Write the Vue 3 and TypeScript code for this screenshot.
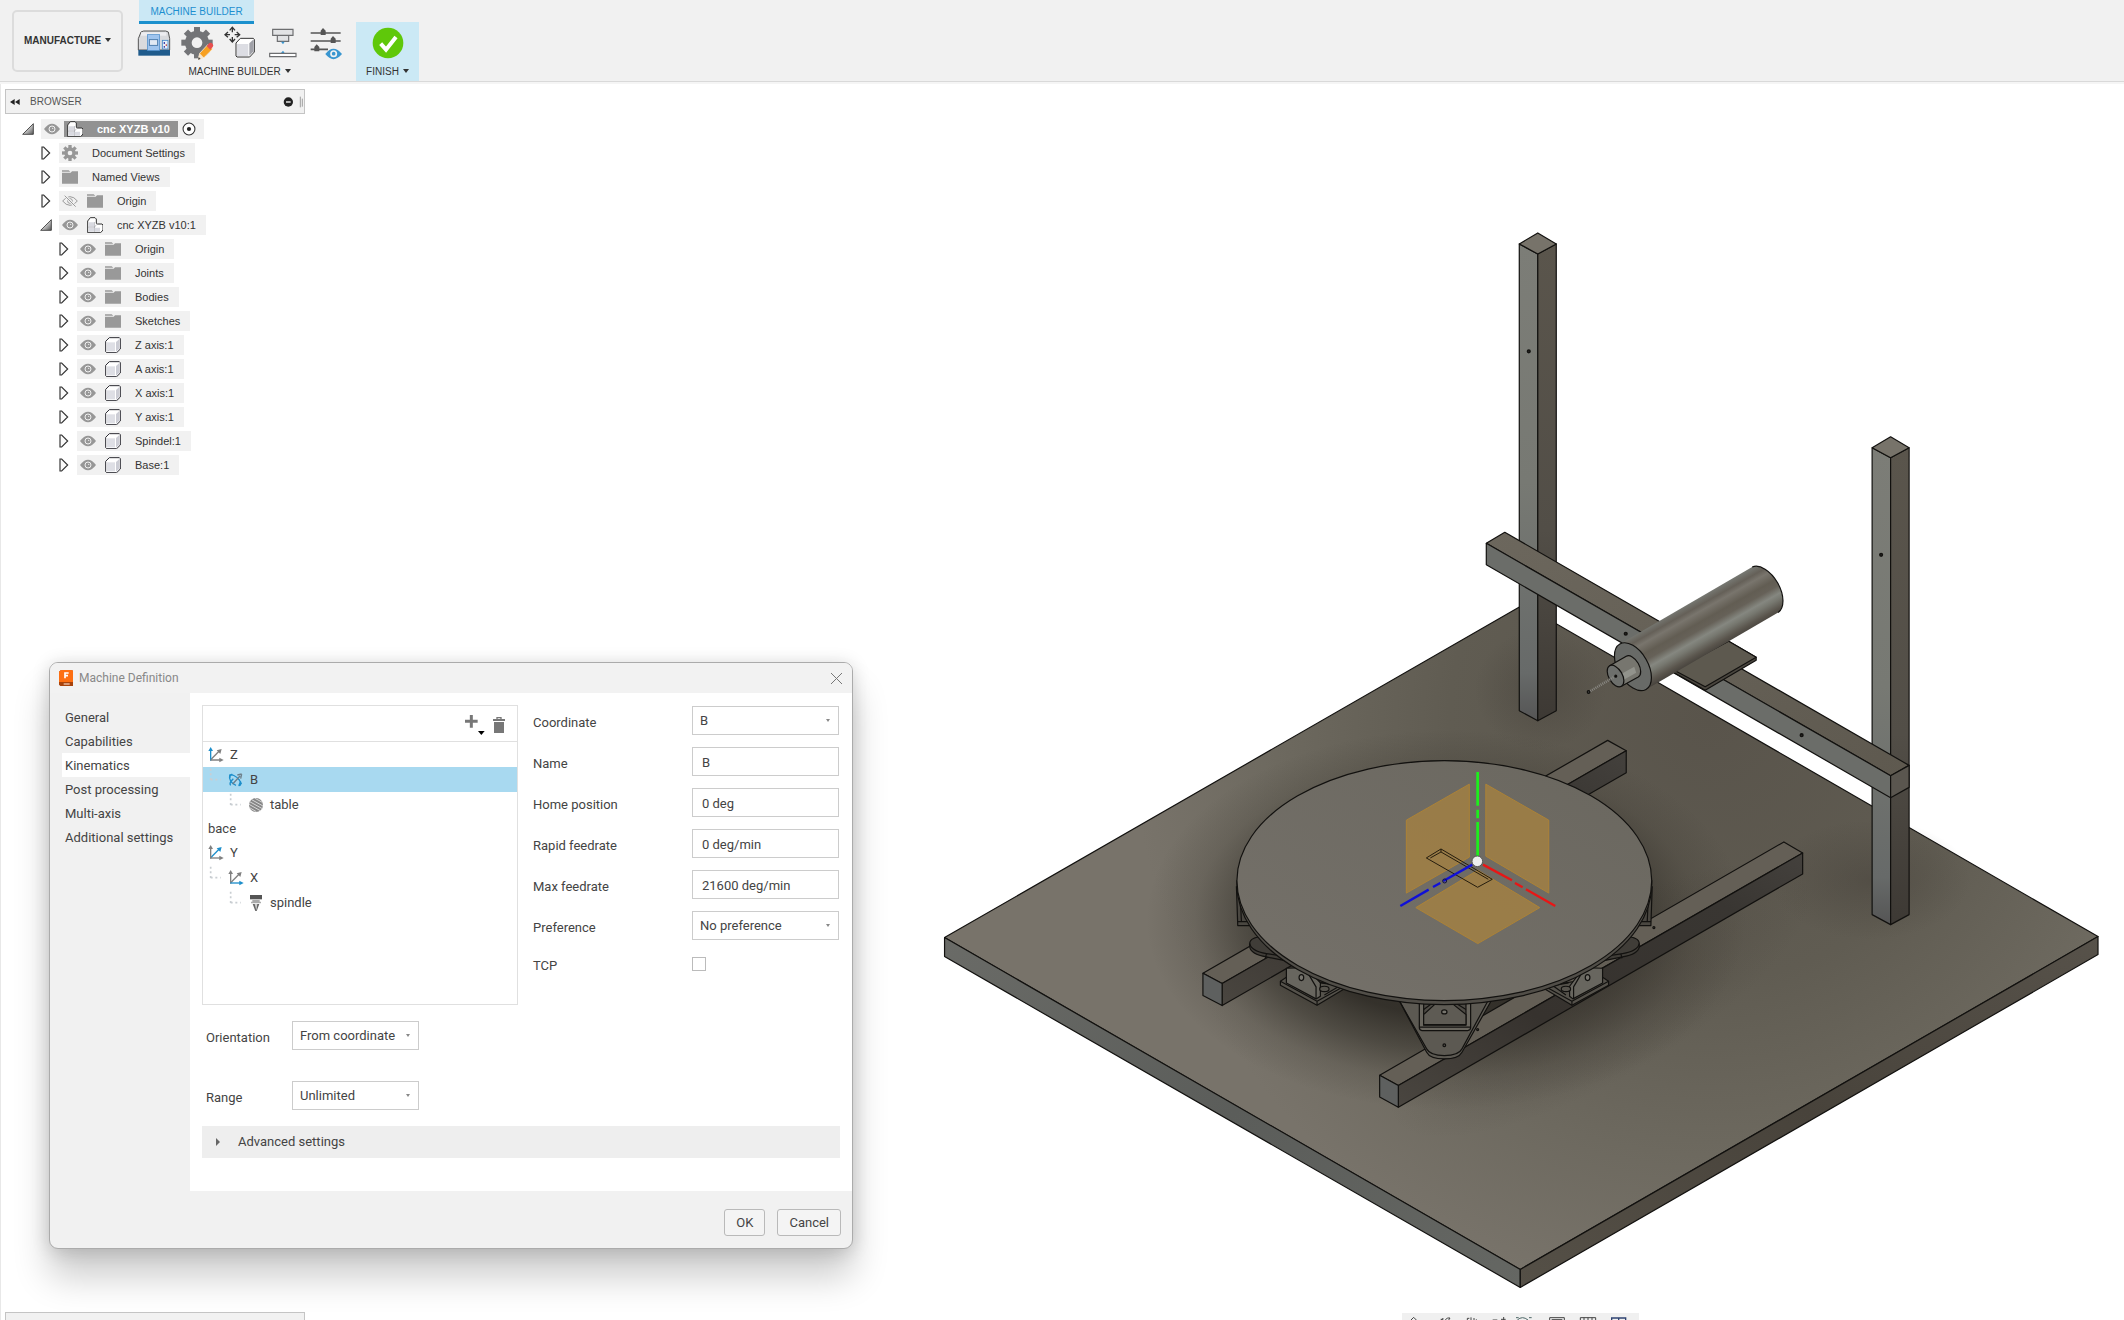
<script setup lang="ts">
import { ref } from 'vue'

interface BrowserNode {
  label: string
  level: number
  icon: 'gear' | 'folder' | 'component' | 'body'
  eye?: 'on' | 'off'
  open?: boolean
}

interface KinematicNode {
  label: string
  level: number
  icon?: 'axis' | 'rotary' | 'table' | 'spindle'
  axis?: 'x' | 'y' | 'z'
}

const nodes: BrowserNode[] = [
  { label: 'Document Settings', level: 1, icon: 'gear' },
  { label: 'Named Views', level: 1, icon: 'folder' },
  { label: 'Origin', level: 1, icon: 'folder', eye: 'off' },
  { label: 'cnc XYZB v10:1', level: 1, icon: 'component', eye: 'on', open: true },
  { label: 'Origin', level: 2, icon: 'folder', eye: 'on' },
  { label: 'Joints', level: 2, icon: 'folder', eye: 'on' },
  { label: 'Bodies', level: 2, icon: 'folder', eye: 'on' },
  { label: 'Sketches', level: 2, icon: 'folder', eye: 'on' },
  { label: 'Z axis:1', level: 2, icon: 'body', eye: 'on' },
  { label: 'A axis:1', level: 2, icon: 'body', eye: 'on' },
  { label: 'X axis:1', level: 2, icon: 'body', eye: 'on' },
  { label: 'Y axis:1', level: 2, icon: 'body', eye: 'on' },
  { label: 'Spindel:1', level: 2, icon: 'body', eye: 'on' },
  { label: 'Base:1', level: 2, icon: 'body', eye: 'on' },
]

const tabs = ['General', 'Capabilities', 'Kinematics', 'Post processing', 'Multi-axis', 'Additional settings']
const activeTab = ref('Kinematics')

const parts: KinematicNode[] = [
  { label: 'Z', level: 0, icon: 'axis', axis: 'z' },
  { label: 'B', level: 1, icon: 'rotary' },
  { label: 'table', level: 2, icon: 'table' },
  { label: 'bace', level: 0 },
  { label: 'Y', level: 0, icon: 'axis', axis: 'y' },
  { label: 'X', level: 1, icon: 'axis', axis: 'x' },
  { label: 'spindle', level: 2, icon: 'spindle' },
]
const selectedPart = ref('B')

const coordinate = ref('B')
const partName = ref('B')
const homePosition = ref('0 deg')
const rapidFeedrate = ref('0 deg/min')
const maxFeedrate = ref('21600 deg/min')
const preference = ref('No preference')
const tcp = ref(false)
const orientation = ref('From coordinate')
const range = ref('Unlimited')
</script>

<template>
  <div class="app">
    <svg class="symbols" aria-hidden="true">
      <symbol id="eye-on" viewBox="-24 -24 48 48">
        <path d="M-24 0Q-12-16 0-16T24 0Q12 16 0 16T-24 0z" fill="#979797" />
        <circle r="9" fill="none" stroke="#f1f1f1" stroke-width="3" />
        <circle cx="2" cy="-2" r="2" fill="#f1f1f1" />
      </symbol>
      <symbol id="eye-off" viewBox="-24 -24 48 48">
        <path d="M-22 0Q-12-13 0-13T22 0Q12 13 0 13T-22 0z" fill="none" stroke="#9a9a9a" stroke-width="3" />
        <circle r="7" fill="none" stroke="#9a9a9a" stroke-width="3" />
        <path d="M-16-16L17 17" stroke="#f1f1f1" stroke-width="8" />
        <path d="M-16-16L17 17" stroke="#9a9a9a" stroke-width="3" />
      </symbol>
      <symbol id="gear" viewBox="-24 -24 48 48">
        <g fill="#979797">
          <rect x="-5" y="-24" width="10" height="48" />
          <rect x="-5" y="-24" width="10" height="48" transform="rotate(45)" />
          <rect x="-5" y="-24" width="10" height="48" transform="rotate(90)" />
          <rect x="-5" y="-24" width="10" height="48" transform="rotate(135)" />
          <circle r="17" />
        </g>
        <circle r="7" fill="#f1f1f1" />
      </symbol>
      <symbol id="folder" viewBox="-24 -24 48 48">
        <path d="M-24-20h20l5 4h-25zM-24-13H2l4-4h18V20h-48z" fill="#999" />
      </symbol>
      <symbol id="component" viewBox="-24 -24 48 48">
        <path d="M-22-12l8-10h14l4 4v13l3 2h14l3 3v15l-7 8h-39z" fill="#fff" stroke="#333" stroke-width="3" />
        <path d="M-19-8h16v13h-16zM-19 8h16v12h-16zM0 8h15v12H0z" fill="#d9dae1" />
        <path d="M-20 6.500h20M-1.500-9v30M-1.500 6.500L5-2" fill="none" stroke="#8d8e96" stroke-width="1.500" />
      </symbol>
      <symbol id="body" viewBox="-24 -24 48 48">
        <path d="M-22-11l11-11h30l3 3v31l-11 11h-30l-3-3z" fill="#fff" stroke="#2e2e35" stroke-width="3" />
        <path d="M-19-8h25v27h-25z" fill="#dedfe5" />
        <path d="M9-9l10-9v29l-10 9z" fill="#cccdd5" />
      </symbol>
      <symbol id="closed" viewBox="0 0 30 42">
        <path d="M3 3h5l18 18L8 39H3z" fill="#fafafa" stroke="#333" stroke-width="3.500" />
      </symbol>
      <symbol id="opened" viewBox="0 0 36 36">
        <path d="M2 34L34 2v32z" fill="url(#opened-fill)" stroke="#333" stroke-width="2.500" />
      </symbol>
      <defs>
        <linearGradient id="opened-fill" x1="0" y1="0" x2="1" y2="1">
          <stop offset=".4" stop-color="#ddd" /><stop offset="1" stop-color="#555" />
        </linearGradient>
      </defs>
    </svg>

    <header class="toolbar">
      <button class="workspace" type="button">MANUFACTURE<i class="caret"></i></button>
      <div class="ribbon">
        <button class="ribbon-tab" type="button">MACHINE BUILDER</button>
        <div class="tools">
          <button type="button" aria-label="Machine">
            <svg viewBox="411 78 102 102" width="34" height="34">
              <path d="M415 150v-34l8-20 8-3h66l8 3 4 20v34z" fill="#d9dadd" stroke="#555" stroke-width="3" />
              <path d="M423 97h76v10h-76z" fill="#ededf0" />
              <path d="M415 150h95v17h-95z" fill="#1f5b8c" />
              <rect x="442" y="104" width="37" height="48" fill="#9fc4ee" stroke="#4286c8" stroke-width="2" />
              <rect x="448" y="119" width="25" height="17" fill="#e1e9f3" stroke="#3c6fa3" stroke-width="2.500" />
              <rect x="487" y="121" width="17" height="26" fill="#e9f0f8" stroke="#4286c8" stroke-width="2.500" />
              <path d="M491 126h4v6h-4z" fill="#44a" /><path d="M497 133h4v5h-4z" fill="#c55" /><path d="M491 138h4v5h-4z" fill="#44a" />
            </svg>
          </button>
          <button type="button" aria-label="Edit machine">
            <svg viewBox="540 78 102 102" width="34" height="34">
              <g transform="translate(591 128)" fill="#737477">
                <rect x="-9" y="-47" width="18" height="94" /><rect x="-9" y="-47" width="18" height="94" transform="rotate(45)" />
                <rect x="-9" y="-47" width="18" height="94" transform="rotate(90)" /><rect x="-9" y="-47" width="18" height="94" transform="rotate(135)" />
                <circle r="36" /><circle r="16" fill="#f1f1f1" />
              </g>
              <path d="M594 179l5-19 24-26 15 13-26 26z" fill="#f7a021" stroke="#fff" stroke-width="2" />
              <path d="M620 138l8-9q6-3 10 3 4 5 0 9l-7 8z" fill="#e84f4f" />
              <path d="M594 179l5-19 13 13z" fill="#f6e5cc" /><path d="M594 179l2-8 6 6z" fill="#444" />
            </svg>
          </button>
          <button type="button" aria-label="Move component">
            <svg viewBox="670 78 102 102" width="34" height="34">
              <path d="M698 83v14M698 111v14M677 104h14M705 104h14" stroke="#333" stroke-width="4" />
              <path d="M690 91l8-9 8 9M690 117l8 9 8-9M685 96l-9 8 9 8M711 96l9 8-9 8" fill="none" stroke="#333" stroke-width="4" />
              <path d="M709 129l13-14h39l3 3v38l-14 15h-38l-3-3z" fill="#fff" stroke="#333" stroke-width="3" />
              <path d="M712 132h34v36h-34z" fill="#dcdde3" /><path d="M749 130l13-12v36l-13 13z" fill="#a0a1a8" />
            </svg>
          </button>
          <button type="button" aria-label="Tool setup">
            <svg viewBox="797 78 102 102" width="34" height="34">
              <path d="M817 88h61v18h-61zM831 106h34v18h-34z" fill="#e2e3e5" stroke="#6d6e70" stroke-width="3.500" />
              <path d="M842 125h11l-5 8z" fill="#3996d0" /><path d="M842 159h11l-5-7z" fill="#3996d0" />
              <path d="M808 160h79v10h-79z" fill="#fff" stroke="#6d6e70" stroke-width="3.500" />
            </svg>
          </button>
          <button type="button" aria-label="Display settings">
            <svg viewBox="928 78 102 102" width="34" height="34">
              <path d="M933 99h90M933 123h90M933 148h52" stroke="#555" stroke-width="5" />
              <path d="M963 105V92l7-8 8 8v13zM993 129v-13l7-8 8 8v13zM944 154v-13l7-8 8 8v13z" fill="#555" />
              <path d="M977 162q24-31 50 0-26 31-50 0z" fill="#3996d0" />
              <circle cx="1002" cy="161" r="8" fill="#3996d0" stroke="#f1f1f1" stroke-width="5" />
            </svg>
          </button>
        </div>
        <button class="ribbon-label" type="button">MACHINE BUILDER<i class="caret"></i></button>
      </div>
      <button class="finish" type="button">
        <svg viewBox="-24 -24 48 48" width="32" height="32">
          <circle r="23" fill="#5fc80a" /><path d="M-11 1l8 9L12-9" fill="none" stroke="#fff" stroke-width="6" />
        </svg>
        <span>FINISH<i class="caret"></i></span>
      </button>
    </header>

    <main class="stage">
      <svg class="scene" viewBox="0 84 2124 1236" preserveAspectRatio="xMaxYMin meet" aria-hidden="true">
        <defs>
          <radialGradient id="floor" gradientUnits="userSpaceOnUse" cx="1710" cy="720" r="580">
            <stop offset="0" stop-color="#59544b" /><stop offset=".45" stop-color="#605c52" />
            <stop offset=".75" stop-color="#6d695f" /><stop offset="1" stop-color="#78736a" />
          </radialGradient>
          <radialGradient id="shade" gradientUnits="userSpaceOnUse" cx="0" cy="0" r="1" gradientTransform="translate(1446 920) scale(300 190)">
            <stop offset=".5" stop-color="#24211c" stop-opacity=".78" /><stop offset=".68" stop-color="#2c2923" stop-opacity=".5" />
            <stop offset=".84" stop-color="#35312a" stop-opacity=".18" /><stop offset="1" stop-color="#35312a" stop-opacity="0" />
          </radialGradient>
          <radialGradient id="soft"><stop offset="0" stop-color="#3d3832" stop-opacity=".36" /><stop offset="1" stop-color="#3d3832" stop-opacity="0" /></radialGradient>
          <linearGradient id="post-l" x1="0" y1="0" x2="0" y2="1">
            <stop offset="0" stop-color="#7c7d77" /><stop offset=".5" stop-color="#777973" /><stop offset=".9" stop-color="#676a69" /><stop offset="1" stop-color="#555" />
          </linearGradient>
          <linearGradient id="post-r" x1="0" y1="0" x2="0" y2="1">
            <stop offset="0" stop-color="#5a554c" /><stop offset=".6" stop-color="#524e47" /><stop offset="1" stop-color="#3d3934" />
          </linearGradient>
          <linearGradient id="disc" x1="1" y1="0" x2="0" y2="1">
            <stop offset="0" stop-color="#6a675f" /><stop offset="1" stop-color="#75716a" />
          </linearGradient>
          <linearGradient id="beam" x1="0" y1="0" x2="1" y2="1"><stop offset="0" stop-color="#6c675d" /><stop offset="1" stop-color="#5e594f" /></linearGradient>
          <linearGradient id="rail" x1="0" y1="1" x2="1" y2="0">
            <stop offset="0" stop-color="#4a4640" /><stop offset=".35" stop-color="#36322e" /><stop offset=".8" stop-color="#393632" /><stop offset="1" stop-color="#44413d" />
          </linearGradient>
          <linearGradient id="edge-l" x1="0" y1="0" x2="1" y2="1"><stop offset="0" stop-color="#6a6b67" /><stop offset=".5" stop-color="#5b5d5a" /><stop offset="1" stop-color="#656763" /></linearGradient>
          <linearGradient id="edge-r" x1="0" y1="1" x2="1" y2="0"><stop offset="0" stop-color="#555047" /><stop offset=".5" stop-color="#48433b" /><stop offset="1" stop-color="#57524a" /></linearGradient>
          <linearGradient id="barrel" gradientUnits="userSpaceOnUse" x1="1686" y1="606" x2="1712" y2="652">
            <stop offset="0" stop-color="#74756f" /><stop offset=".12" stop-color="#656058" /><stop offset=".22" stop-color="#79756d" /><stop offset=".4" stop-color="#625d53" />
            <stop offset=".52" stop-color="#666158" /><stop offset=".66" stop-color="#858780" /><stop offset=".75" stop-color="#777870" /><stop offset=".9" stop-color="#5a554d" /><stop offset="1" stop-color="#48443e" />
          </linearGradient>
        </defs>

        <g stroke="#12110f" stroke-width="1.200" stroke-linejoin="round">
          <!-- base plate -->
          <path d="M944 938L1523 605 2098 937 1520 1270z" fill="url(#floor)" />
          <path d="M944 938L1523 605 2098 937 1520 1270z" fill="url(#shade)" stroke="none" />
          <g stroke="none" fill="url(#soft)">
            <ellipse cx="1540" cy="690" rx="66" ry="60" /><ellipse cx="1870" cy="880" rx="100" ry="60" />
            <ellipse cx="1600" cy="1000" rx="240" ry="80" transform="rotate(-30 1600 1000)" />
          </g>
          <path d="M944 938L1520 1270v18L944 957z" fill="url(#edge-l)" />
          <path d="M1520 1270L2098 937v18L1520 1288z" fill="url(#edge-r)" />

          <!-- posts -->
          <path d="M1519 244l18.500 10v467l-18.500-10z" fill="url(#post-l)" />
          <path d="M1556 244l-18.500 10v467l18.500-10z" fill="url(#post-r)" />
          <path d="M1519 244l18.500-11 18.500 11-18.500 10z" fill="#77736a" />
          <path d="M1872 448l18.500 10v467l-18.500-10z" fill="url(#post-l)" />
          <path d="M1909 448l-18.500 10v467l18.500-10z" fill="url(#post-r)" />
          <path d="M1872 448l18.500-11 18.500 11-18.500 10z" fill="#77736a" />

          <!-- cross beam -->
          <path d="M1486 543.500L1504.500 532.500 1909 765.700 1890.500 776z" fill="url(#beam)" />
          <path d="M1486 543.500L1890.500 776v22L1486 565z" fill="#6b6d69" />
          <path d="M1890.500 776l18.500-10.300v22l-18.500 10.300z" fill="#5a564f" />
          <g fill="#35332f" stroke-width="1.600">
            <circle cx="1528.500" cy="351.500" r="1.300" /><circle cx="1881" cy="555" r="1.300" />
            <circle cx="1625.500" cy="634" r="1.300" /><circle cx="1801.500" cy="735.500" r="1.300" />
          </g>

          <!-- spindle -->
          <path d="M1674 670.500L1728.500 641.500 1756 657.500v3L1705 690.500 1674 673z" fill="#4a463f" />
          <path d="M1674 670.500L1728.500 641.500 1756 657.500 1705 687z" fill="#5d594f" />
          <path d="M1619.600 644.300L1752 567.300A26.200 15.100 60 0 1 1778 612.700L1645.800 689.700z" fill="url(#barrel)" stroke="none" />
          <path d="M1752 567.300A26.200 15.100 60 0 1 1778 612.700" fill="none" />
          <ellipse cx="1632.700" cy="667" rx="26.200" ry="15.100" transform="rotate(60 1632.700 667)" fill="#686a67" />
          <path d="M1609.400 666.100L1626 656.600A11.800 6.800 60 0 1 1638 677.300L1621.200 686.500z" fill="#77766f" />
          <path d="M1616 677L1634 667l2 6-16 9z" fill="#92938c" stroke="none" />
          <ellipse cx="1615.300" cy="676.300" rx="11.800" ry="6.800" transform="rotate(60 1615.300 676.300)" fill="#6d6f6c" />
          <path d="M1615 676.500L1589 692" stroke="#8b8a85" stroke-width="2.500" stroke-dasharray="1 1" />
          <circle cx="1615.500" cy="676.500" r="1" /><circle cx="1588.300" cy="692.300" r="1.300" fill="#444" />

          <!-- rails -->
          <path d="M1202.500 973.700L1607.400 740.700 1626 751 1221.700 984z" fill="#645f56" />
          <path d="M1221.700 984L1626 751v22L1221.700 1006z" fill="url(#rail)" />
          <path d="M1202.500 973.700l19.200 10.300v22l-19.200-10z" fill="#5e605f" />
          <path d="M1379.300 1075.700L1783.700 842.300 1802.500 853.300 1398 1086z" fill="#645f56" />
          <path d="M1398 1086L1802.500 853.300v21L1398 1107.700z" fill="url(#rail)" />
          <path d="M1379.300 1075.700l18.700 10.300v21.700l-18.700-10.200z" fill="#5e605f" />

          <!-- supports beneath the table -->
          <g transform="translate(1180 900) scale(.33333)" stroke-width="3.600" fill="#57544d">
            <path d="M168-40l4 118h42V-20M180 0l3 66h30M172 66h36" fill="#4a4741" />
            <path d="M1416-40l-4 118h-50V-20M1404 0l-3 66h-30M1412 66h-40" fill="#4a4741" />
            <path d="M300 110h-50q-42 3-42 22v10q3 22 50 30l90 18z" fill="#403d38" />
            <path d="M208 132q4 22 50 30l90 14M258 162l-3 14" fill="none" />
            <path d="M1290 110h45q42 3 42 22v10q-3 22-50 30l-90 18z" fill="#403d38" />
            <path d="M1377 132q-4 22-50 30l-90 14M1322 162l3 14" fill="none" />
            <path d="M300 245l18-12 172 26v10l-80 48-110-60z" fill="#55524b" />
            <path d="M300 245l110 60 80-44M410 305v12" fill="none" />
            <path d="M318 206v44l89 48 13-8v-40l-42-46z" fill="#68665f" />
            <path d="M407 298v-36l-27-46M420 250l60 8-48 28" fill="none" />
            <ellipse cx="432" cy="268" rx="14" ry="8" /><ellipse cx="363" cy="234" rx="7" ry="9" fill="#77756e" />
            <path d="M1285 245l-18-12-172 26v10l80 48 110-60z" fill="#55524b" />
            <path d="M1285 245l-110 60-80-44M1175 305v12" fill="none" />
            <path d="M1267 206v44l-89 48-10-8v-30l42-56z" fill="#68665f" />
            <path d="M1180 296v-34l27-46M1165 250l-48 8 40 28" fill="none" />
            <ellipse cx="1157" cy="268" rx="14" ry="8" /><ellipse cx="1222" cy="234" rx="7" ry="9" fill="#77756e" />
            <path d="M655 300l84 158q10 20 53 20t53-20L935 300z" fill="#5c5952" />
            <path d="M655 300l84 148q10 20 53 20t53-20L925 300" fill="none" />
            <path d="M717 300v84q0 8 8 9h137q9-1 9-9v-84z" fill="#69665e" />
            <path d="M730 300v77h127v-77zM717 383h154" fill="#4e4b45" />
            <path d="M730 345l35-32h52l40 32v30H730zM730 330l30-22M857 330l-35-22" fill="#5e5b54" />
            <ellipse cx="792" cy="337" rx="8" ry="6" fill="#77756e" /><circle cx="792" cy="437" r="4" />
            <circle cx="892" cy="390" r="3" /><circle cx="1421" cy="84" r="3" />
          </g>

          <!-- rotary table -->
          <path d="M1236.500 881v4A207.500 120 0 0 0 1651.500 885v-4z" fill="#514e48" />
          <ellipse cx="1444" cy="881" rx="207.500" ry="120" fill="url(#disc)" />
        </g>

        <!-- origin planes and axes -->
        <g fill="#b0853a" fill-opacity=".66" stroke="#ad8336" stroke-width="1">
          <path d="M1469 784.500v73l-63 36v-73z" /><path d="M1485.500 784.500l63 36v73l-63-37z" /><path d="M1477.500 870.500l62 37.500-62 36-62-36z" />
        </g>
        <g transform="translate(1380 740) scale(.33333)" fill="none" stroke="#241c0d" stroke-width="3">
          <path d="M138 355l44-27 154 91-44 24zM150 355l32-18 142 82M182 328v9" />
          <path d="M292 97v101M292 210v26M292 247v105" stroke="#1cf01c" stroke-width="8" />
          <path d="M308 375l87 47M404 430l23 13M437 449l88 50" stroke="#e81616" stroke-width="7" />
          <path d="M276 375l-87 49M180 430l-22 12M145 450l-85 49" stroke="#1010d8" stroke-width="7" />
          <circle cx="193" cy="424" r="6" stroke="#10104a" /><circle cx="291" cy="365" r="16" fill="#eee" stroke="#555" />
        </g>
      </svg>

      <aside class="browser">
        <div class="browser-head">
          <svg viewBox="0 0 30 18" width="10" height="6"><path d="M14 0v18L0 9zM29 0v18L15 9z" fill="#222" /></svg>
          <span>BROWSER</span>
          <svg viewBox="0 0 60 36" width="20" height="12" class="pin"><circle cx="16" cy="18" r="14" fill="#222" /><path d="M9 18h14" stroke="#fff" stroke-width="4" /><path d="M52 2v32M58 8v24" stroke="#777" stroke-width="2" /></svg>
        </div>
        <ul class="nodes">
          <li class="node root">
            <svg class="twist" width="12" height="12"><use href="#opened" /></svg>
            <div class="chip">
              <svg width="16" height="16"><use href="#eye-on" /></svg>
              <span class="active"><svg width="16" height="16"><use href="#component" /></svg>cnc XYZB v10</span>
              <svg viewBox="-20 -20 40 40" width="14" height="14"><circle r="17" fill="#fff" stroke="#333" stroke-width="3" /><circle r="6" fill="#222" /></svg>
            </div>
          </li>
          <li v-for="(node, i) in nodes" :key="i" class="node" :class="'level-' + node.level">
            <svg v-if="node.open" class="twist" width="12" height="12"><use href="#opened" /></svg>
            <svg v-else class="twist" width="10" height="14"><use href="#closed" /></svg>
            <div class="chip">
              <svg v-if="node.eye" width="16" height="16"><use :href="'#eye-' + node.eye" /></svg>
              <svg width="16" height="16"><use :href="'#' + node.icon" /></svg>
              <span>{{ node.label }}</span>
            </div>
          </li>
        </ul>
      </aside>

      <section class="dialog" role="dialog" aria-labelledby="dialog-title">
        <header class="title">
          <svg viewBox="0 0 42 48" width="14" height="16">
            <path d="M6 0h33l3 3v45H4l-4-4V5z" fill="#a8430c" /><path d="M6 0h33l3 3v33H0V5z" fill="#fd6f12" />
            <path d="M18 25V9h11M18 17h9" fill="none" stroke="#fff" stroke-width="5" /><path d="M14 40h18v4H14z" fill="#e8b79c" />
          </svg>
          <h1 id="dialog-title">Machine Definition</h1>
          <button class="close" type="button" aria-label="Close"><svg viewBox="0 0 11 11" width="11" height="11"><path d="M0 0l11 11M11 0L0 11" stroke="#777" /></svg></button>
        </header>
        <div class="dialog-body">
          <nav class="side">
            <button v-for="tab in tabs" :key="tab" type="button" :class="{ on: tab === activeTab }" @click="activeTab = tab">{{ tab }}</button>
          </nav>
          <div class="content">
            <div class="columns">
              <div class="parts">
                <div class="parts-tools">
                  <button type="button" aria-label="Add part">
                    <svg viewBox="0 0 60 60" width="20" height="20"><path d="M19 0v38M0 19h38" stroke="#777" stroke-width="9" /><path d="M39 48h20L49 60z" fill="#000" /></svg>
                  </button>
                  <button type="button" aria-label="Delete part">
                    <svg viewBox="0 0 36 48" width="12" height="16"><path d="M0 6h36v6H0zM10 0h16v6h-4V4h-8v2h-4zM3 15h30v33H3z" fill="#777" /></svg>
                  </button>
                </div>
                <ul>
                  <li v-for="part in parts" :key="part.label" :class="['depth-' + part.level, { picked: part.label === selectedPart, plain: !part.icon }]" @click="selectedPart = part.label">
                    <svg v-if="part.level" class="branch" viewBox="0 0 60 75" width="20" height="25"><path d="M8 5v34" /><path d="M8 38h30" /></svg>
                    <svg v-if="part.icon === 'axis'" :class="['part-icon', 'axis-' + part.axis]" viewBox="0 0 48 48" width="16" height="16">
                      <g class="y"><path d="M8 38L36 10" /><path class="tip" d="M41 6L26 10l11 11z" /></g>
                      <g class="z"><path d="M8 41V8" /><path class="tip" d="M8 0L1 12h14z" /></g>
                      <g class="x"><path d="M7 39h32" /><path class="tip" d="M47 39L34 32v14z" /></g>
                    </svg>
                    <svg v-else-if="part.icon === 'rotary'" class="part-icon" viewBox="0 0 48 48" width="16" height="16" fill="none" stroke="#1e8fcb" stroke-width="4">
                      <path d="M24 40C10 36 2 20 5 12c4-8 20 0 29 12 6 9 6 16-2 17" /><path d="M4 13l9-7M6 7v10M32 41l9-9M38 28l-5 12" />
                      <path d="M8 40q-6-7 8-20" /><path d="M14 36L36 12M41 6L28 9M41 6l-3 14" stroke="#6e7f8a" />
                    </svg>
                    <svg v-else-if="part.icon === 'table'" class="part-icon" viewBox="0 0 48 48" width="16" height="16">
                      <circle cx="24" cy="24" r="21" fill="#868686" /><path d="M11 8l34 19M5 14l38 21M3 22l34 19M3 31l22 13M21 4l22 12" stroke="#d8d8d8" stroke-width="3" />
                    </svg>
                    <svg v-else-if="part.icon === 'spindle'" class="part-icon" viewBox="0 0 48 48" width="16" height="16">
                      <path d="M6 0h36v13H6z" fill="#555" /><path d="M13 15h22v5h4v5H9v-5h4z" fill="#aaa" /><path d="M14 27h20L26 48h-4z" fill="#666" /><path d="M20 27h8l-3 19z" fill="#ccc" />
                    </svg>
                    <span>{{ part.label }}</span>
                  </li>
                </ul>
              </div>
              <form class="fields" @submit.prevent>
                <div class="field">
                  <label for="coordinate">Coordinate</label>
                  <span class="pick"><select id="coordinate" v-model="coordinate"><option>B</option></select></span>
                </div>
                <div class="field"><label for="part-name">Name</label><input id="part-name" v-model="partName" type="text" /></div>
                <div class="field"><label for="home">Home position</label><input id="home" v-model="homePosition" type="text" /></div>
                <div class="field"><label for="rapid">Rapid feedrate</label><input id="rapid" v-model="rapidFeedrate" type="text" /></div>
                <div class="field"><label for="max">Max feedrate</label><input id="max" v-model="maxFeedrate" type="text" /></div>
                <div class="field">
                  <label for="preference">Preference</label>
                  <span class="pick"><select id="preference" v-model="preference"><option>No preference</option></select></span>
                </div>
                <div class="field check"><label for="tcp">TCP</label><span><input id="tcp" v-model="tcp" type="checkbox" /></span></div>
              </form>
            </div>
            <div class="field lower">
              <label for="orientation">Orientation</label>
              <span class="pick"><select id="orientation" v-model="orientation"><option>From coordinate</option></select></span>
            </div>
            <div class="field lower">
              <label for="range">Range</label>
              <span class="pick"><select id="range" v-model="range"><option>Unlimited</option></select></span>
            </div>
            <button class="advanced" type="button"><svg viewBox="0 0 4 8" width="4" height="8"><path d="M0 0l4 4-4 4z" fill="#666" /></svg>Advanced settings</button>
          </div>
        </div>
        <footer class="actions">
          <button type="button">OK</button>
          <button type="button">Cancel</button>
        </footer>
      </section>

      <footer class="bottom">
        <div class="comments"></div>
        <div class="view-bar">
          <svg viewBox="66 69 711 21" width="237" height="7" fill="none" stroke="#444" stroke-width="3">
            <path d="M93 90l8-8 8 8M182 88h8M184 90l6-6M196 90l6-6h8l-4 6M262 90v-5h6M273 90v-8M282 90v-6M289 90v-2M338 90h14M371 81v9M363 88h14" />
            <path d="M412 90q15-14 32 0M408 83h8M447 83h8" stroke="#4c6666" />
            <path d="M509 90v-7h44v7M515 89h32M601 90v-7h46v7M612 83v7M624 83v7M636 83v7" />
            <path d="M695 90v-6h42v6M716 84v6" stroke="#2f4372" stroke-width="4" />
          </svg>
        </div>
      </footer>
    </main>
  </div>
</template>

<style>
body { margin: 0; background: #fff; }
</style>

<style scoped>
* { box-sizing: border-box; }
button { border: 0; padding: 0; background: none; font: inherit; color: inherit; }
ul { list-style: none; margin: 0; padding: 0; }
svg { display: block; flex: none; }
.symbols { position: absolute; width: 0; height: 0; }
.app { height: 100vh; display: flex; flex-direction: column; overflow: hidden; font: 11px/16px "Liberation Sans", Arial, sans-serif; color: #333; }

.toolbar { flex: none; height: 84px; display: flex; background: #f1f1f1; font-size: 10px; box-shadow: inset 0 -2px #f5f5f5, inset 0 -3px #d9d9d9; }
.caret { display: inline-block; border: 3px solid transparent; border-top: 4px solid #333; border-bottom: 0; margin-left: 4px; vertical-align: 2px; }
.workspace { width: 111px; height: 62px; margin: 10px 9px 0 12px; border: 2px solid #dcdcdc; border-radius: 5px; font-weight: bold; }
.ribbon { width: 215px; display: flex; flex-direction: column; }
.ribbon-tab { width: 115px; height: 24px; padding-top: 2px; margin-left: 7px; background: #cbe8f5; color: #1d8fd0; border-bottom: 3px solid #1b90cd; }
.tools { display: grid; grid-template-columns: repeat(5, 1fr); height: 38px; align-items: center; justify-items: center; }
.ribbon-label { line-height: 20px; }
.finish { width: 63px; height: 59px; margin: 22px 0 0 9px; background: #cbe9f5; display: flex; flex-direction: column; align-items: center; justify-content: space-between; padding: 5px 0 1px; }

.stage { position: relative; flex: 1; min-height: 0; display: flex; flex-direction: column; justify-content: space-between; border-left: 1px solid #e8e8e8; }
.scene { position: absolute; inset: 0; width: 100%; height: 100%; }
.browser { position: relative; width: 300px; margin: 5px 0 0 4px; }
.browser-head { height: 25px; border: 1px solid #c4c4c4; background: #f1f1f1; display: flex; align-items: center; gap: 10px; padding: 0 1px 0 4px; font-size: 10px; color: #555; }
.pin { margin-left: auto; }
.nodes { padding-top: 5px; display: flex; flex-direction: column; gap: 4px; }
.node { height: 20px; width: max-content; display: flex; align-items: center; }
.node.root { padding-left: 17px; }
.level-1 { padding-left: 35px; }
.level-2 { padding-left: 53px; }
.twist { width: 12px; margin-right: 7px; }
.chip { height: 20px; background: #f1f1f1; display: flex; align-items: center; padding: 0 10px 0 3px; gap: 9px; }
.chip > span { margin-left: 5px; }
.root .chip { gap: 4px; padding-right: 8px; }
.chip > .active { height: 16px; margin-left: 0; background: #929292; color: #fff; font-weight: bold; display: flex; align-items: center; gap: 14px; padding: 0 8px 0 3px; }

.dialog { position: absolute; left: 48px; top: 578px; width: 804px; max-width: 90vw; border: 1px solid #ababab; border-radius: 9px; background: #f1f1f1; overflow: hidden; box-shadow: 0 28px 36px rgba(0, 0, 0, .2), 0 2px 18px rgba(0, 0, 0, .16); font: 13px/16px Roboto, "Open Sans", sans-serif; color: #444; }
.title { height: 30px; display: flex; align-items: center; gap: 6px; padding: 0 9px; background: #f2f2f2; }
.title h1 { margin: 0; font: 12px/16px Roboto, "Open Sans", sans-serif; color: #888; }
.close { margin-left: auto; width: 12px; }
.dialog-body { display: flex; }
.side { width: 140px; padding: 12px 0 0 12px; display: flex; flex-direction: column; }
.side button { height: 24px; padding: 2px 0 0 3px; text-align: left; }
.side .on { background: #fff; }
.content { flex: 1; background: #fff; padding: 12px 12px 33px; }
.columns { display: flex; gap: 15px; margin-bottom: 16px; }
.parts { width: 316px; height: 300px; border: 1px solid #e0e0e0; }
.parts-tools { height: 36px; display: flex; justify-content: flex-end; align-items: center; gap: 8px; padding: 2px 12px 0 0; border-bottom: 1px solid #e0e0e0; }
.parts li { height: 25px; display: flex; align-items: center; padding-left: 5px; }
.parts li.plain { height: 23px; }
.parts li.depth-2 { padding-left: 25px; }
.parts li.picked { background: #a8d9f0; }
.part-icon { margin-right: 6px; }
.branch path { fill: none; stroke: #c9ced2; stroke-width: 5px; stroke-dasharray: 6 8; }
.part-icon g { fill: none; stroke: #808080; stroke-width: 4px; }
.part-icon g .tip { fill: #808080; stroke: none; }
.part-icon.axis-x .x, .part-icon.axis-y .y, .part-icon.axis-z .z { stroke: #1e8fcb; }
.part-icon.axis-x .x .tip, .part-icon.axis-y .y .tip, .part-icon.axis-z .z .tip { fill: #1e8fcb; }
.fields { flex: 1; display: flex; flex-direction: column; gap: 12px; padding: 1px 1px 0 0; }
.field { display: flex; align-items: center; justify-content: space-between; height: 29px; }
.field label { padding-top: 4px; }
.field > input, .pick { position: relative; display: block; width: 147px; height: 29px; border: 1px solid #ccc; background: #fff; }
.field > input { padding: 2px 9px 0; font: inherit; color: inherit; outline: 0; border-radius: 0; }
.pick select { appearance: none; width: 100%; height: 100%; border: 0; padding: 0 7px; background: none; font: inherit; color: inherit; outline: 0; }
.pick::after { content: ""; position: absolute; right: 8px; top: 12px; border: 2px solid transparent; border-top: 3px solid #888; border-bottom: 0; }
.field.check { height: 24px; }
.check span { width: 147px; }
.check input { appearance: none; display: block; width: 14px; height: 14px; margin: 0; border: 1px solid #bbb; background: #fff; }
.lower { justify-content: flex-start; padding-left: 4px; margin-bottom: 31px; }
.lower label { width: 86px; }
.lower .pick { width: 127px; }
.lower + .lower { margin-bottom: 16px; }
.advanced { display: flex; align-items: center; gap: 18px; width: 100%; height: 32px; padding-left: 14px; background: #eee; }
.actions { height: 57px; display: flex; justify-content: flex-end; align-items: flex-start; gap: 12px; padding: 18px 11px 0; }
.actions button { height: 27px; padding: 0 11px; border: 1px solid #b9b9b9; border-radius: 3px; background: #f4f4f4; }

.bottom { position: relative; height: 8px; display: flex; }
.comments { width: 300px; margin-left: 4px; border: 1px solid #c4c4c4; border-bottom: 0; background: #f1f1f1; }
.view-bar { margin: 1px 485px 0 auto; background: #f0f0f0; }
</style>
